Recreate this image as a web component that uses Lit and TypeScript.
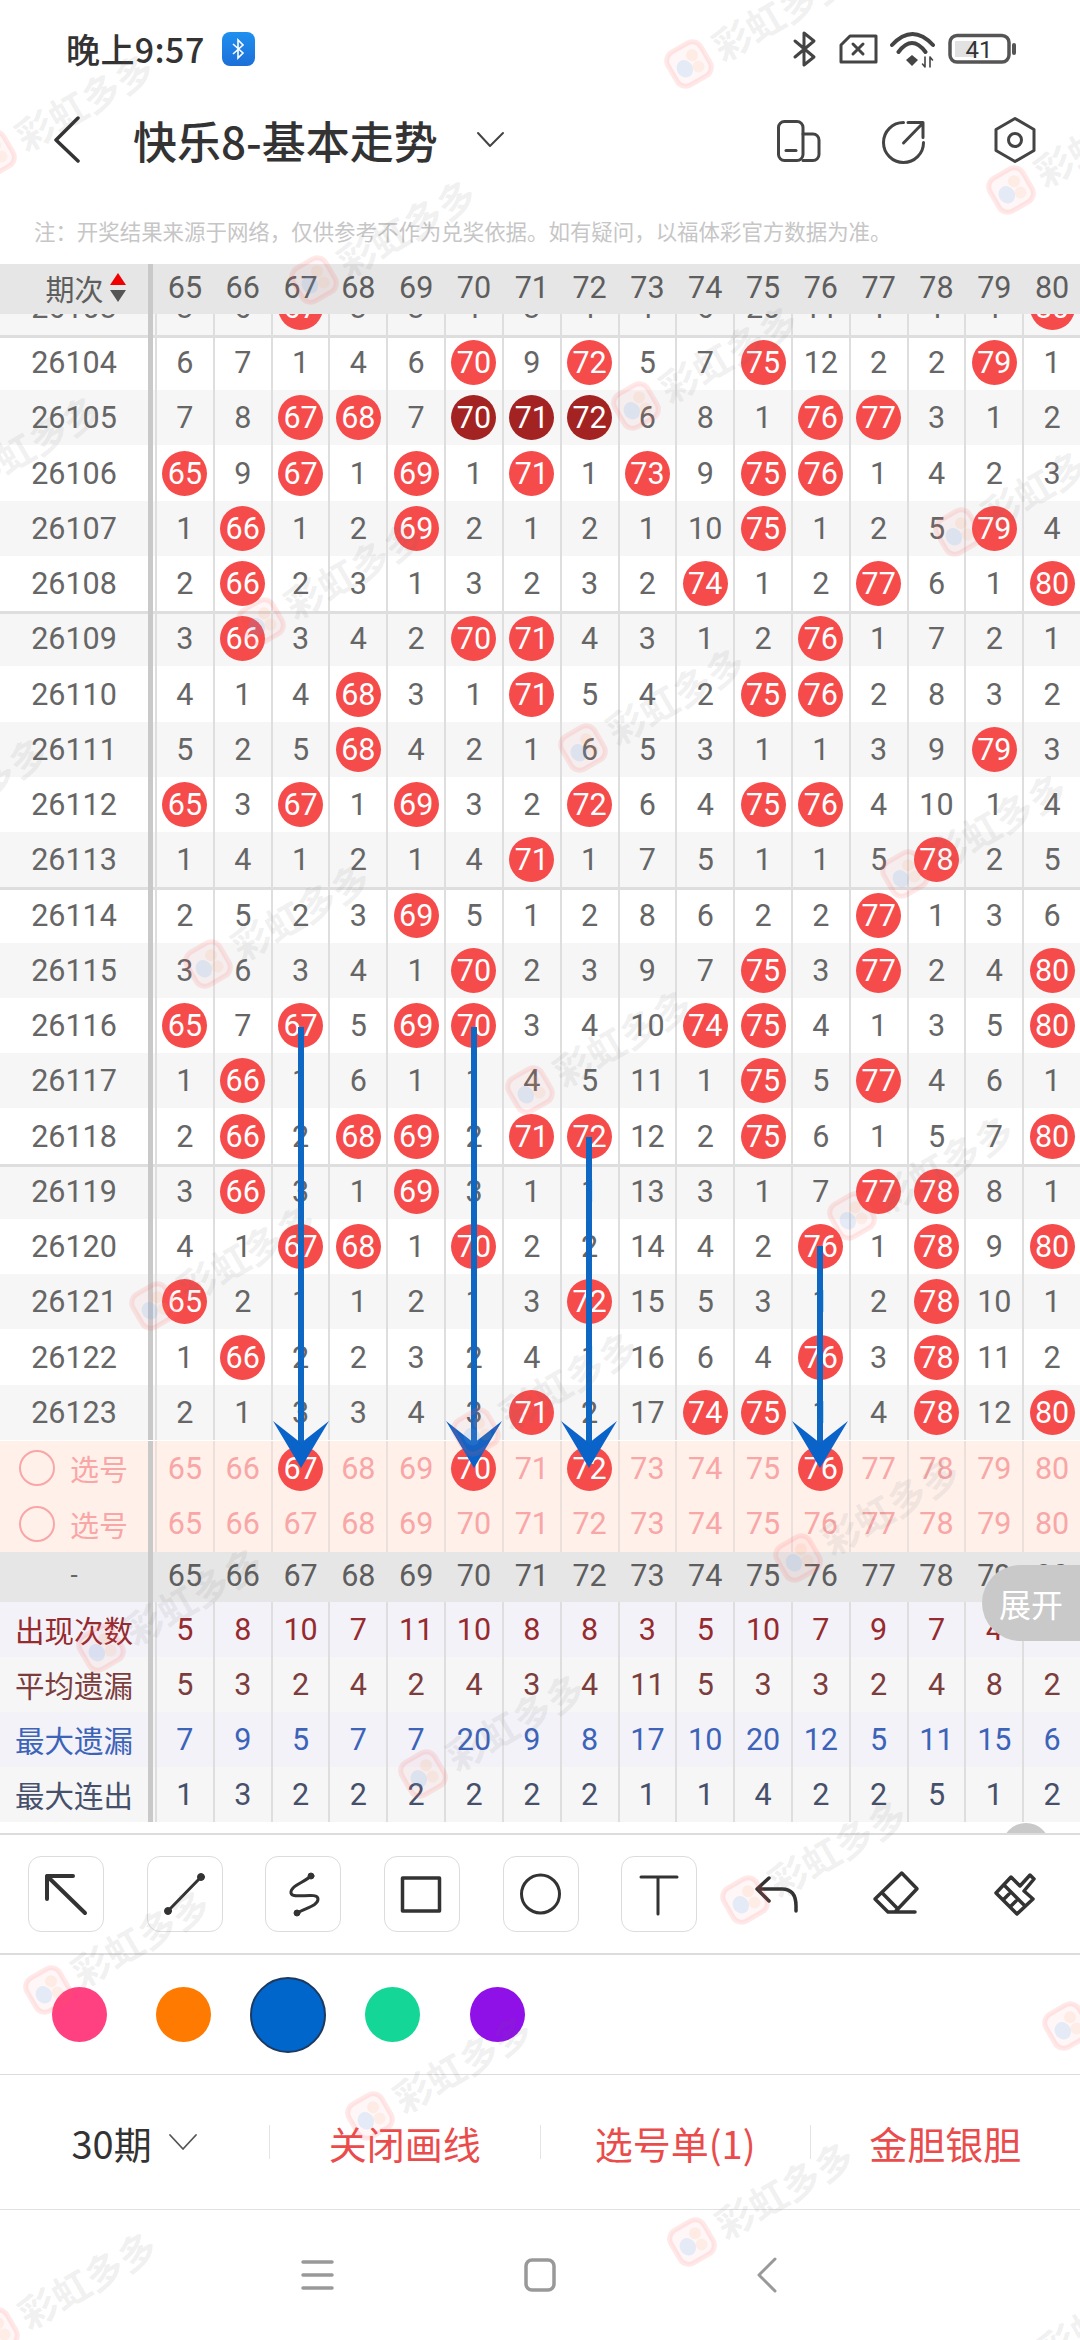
import { LitElement, html, css, svg, unsafeCSS } from 'lit'
import { customElement } from 'lit/decorators.js'

const ROWS: [number, string][] = [
  [26103, '3 6 *67 3 3 1 3 1 1 6 20 11 1 1 1 *80'],
  [26104, '6 7 1 4 6 *70 9 *72 5 7 *75 12 2 2 *79 1'],
  [26105, '7 8 *67 *68 7 !70 !71 !72 6 8 1 *76 *77 3 1 2'],
  [26106, '*65 9 *67 1 *69 1 *71 1 *73 9 *75 *76 1 4 2 3'],
  [26107, '1 *66 1 2 *69 2 1 2 1 10 *75 1 2 5 *79 4'],
  [26108, '2 *66 2 3 1 3 2 3 2 *74 1 2 *77 6 1 *80'],
  [26109, '3 *66 3 4 2 *70 *71 4 3 1 2 *76 1 7 2 1'],
  [26110, '4 1 4 *68 3 1 *71 5 4 2 *75 *76 2 8 3 2'],
  [26111, '5 2 5 *68 4 2 1 6 5 3 1 1 3 9 *79 3'],
  [26112, '*65 3 *67 1 *69 3 2 *72 6 4 *75 *76 4 10 1 4'],
  [26113, '1 4 1 2 1 4 *71 1 7 5 1 1 5 *78 2 5'],
  [26114, '2 5 2 3 *69 5 1 2 8 6 2 2 *77 1 3 6'],
  [26115, '3 6 3 4 1 *70 2 3 9 7 *75 3 *77 2 4 *80'],
  [26116, '*65 7 *67 5 *69 *70 3 4 10 *74 *75 4 1 3 5 *80'],
  [26117, '1 *66 1 6 1 1 4 5 11 1 *75 5 *77 4 6 1'],
  [26118, '2 *66 2 *68 *69 2 *71 *72 12 2 *75 6 1 5 7 *80'],
  [26119, '3 *66 3 1 *69 3 1 1 13 3 1 7 *77 *78 8 1'],
  [26120, '4 1 *67 *68 1 *70 2 2 14 4 2 *76 1 *78 9 *80'],
  [26121, '*65 2 1 1 2 1 3 *72 15 5 3 1 2 *78 10 1'],
  [26122, '1 *66 2 2 3 2 4 1 16 6 4 *76 3 *78 11 2'],
  [26123, '2 1 3 3 4 3 *71 2 17 *74 *75 1 4 *78 12 *80'],
]

const NUMS = Array.from({ length: 16 }, (_, i) => String(65 + i))
const PICKED = new Set(['67', '70', '72', '76'])

const STATS = [
  { label: '出现次数', cls: 's1', vals: '5 8 10 7 11 10 8 8 3 5 10 7 9 7 4 8' },
  { label: '平均遗漏', cls: 's2', vals: '5 3 2 4 2 4 3 4 11 5 3 3 2 4 8 2' },
  { label: '最大遗漏', cls: 's3', vals: '7 9 5 7 7 20 9 8 17 10 20 12 5 11 15 6' },
  { label: '最大连出', cls: 's4', vals: '1 3 2 2 2 2 2 2 1 1 4 2 2 5 1 2' },
]

// drawn strokes on top of the table: x, start y
const ARROWS = [
  [301, 1027],
  [474, 1027],
  [589, 1137],
  [820, 1246],
]

const COLORS = ['#ff4081', '#ff7a00', '#0066cc', '#14d696', '#9010e8']

const TOOLS = [
  svg`<path d="M19 43V20H45M19 20L57 57" stroke-width="4"/>`,
  svg`<path d="M22 55L55 21" stroke-width="3"/><circle cx="22" cy="55" r="3.5" fill="#333"/><circle cx="55" cy="21" r="3.5" fill="#333"/>`,
  svg`<path d="M46 20C38 27 25 30 26 37C27 44 53 35 53 43C53 50 40 52 32 57" stroke-width="3"/><circle cx="46" cy="20" r="3" fill="#333"/><circle cx="32" cy="57" r="3" fill="#333"/>`,
  svg`<rect x="19.5" y="22" width="37" height="33" stroke-width="3.5"/>`,
  svg`<circle cx="38.5" cy="38" r="19" stroke-width="3"/>`,
  svg`<path d="M20 21H56M37 21V58" stroke-width="3"/>`,
  svg`<path d="M30 22L18 33L30 45M18 33H43Q57 33 57 50V55" stroke-width="3.5"/>`,
  svg`<path d="M43.7 17L59 32.7L37 56H30L17 43ZM25 37.7L38.7 51.7M30 56H57" stroke-width="3.5"/>`,
  svg`<path d="M19 37L34 21L43 30L53 19L57 23L47 35L56 43L40 58ZM27 29L48 50M26 44L32 38M33 51L39 45" stroke-width="3.5"/>`,
]

const CJK = unsafeCSS(`"Noto Sans CJK SC", Roboto, sans-serif`)

@customElement('app-root')
export class AppRoot extends LitElement {
  static styles = css`
    :host {
      display: block;
      position: relative;
      width: 1080px;
      height: 2340px;
      overflow: hidden;
      background: #fff;
      font-family: Roboto, "Noto Sans CJK SC", sans-serif;
      color: #333;
    }
    svg { display: block; flex: none; }
    .line { fill: none; stroke-linecap: round; stroke-linejoin: round; }

    .status {
      display: flex;
      align-items: center;
      height: 98px;
      padding: 0 62px 0 66px;
    }
    .time {
      font-family: ${CJK};
      font-size: 34px;
      font-weight: 500;
      letter-spacing: 0.4px;
      color: #333;
      line-height: 1;
    }
    .badge {
      width: 33px;
      height: 34px;
      margin-left: 17px;
      border-radius: 8px;
      background: linear-gradient(#1e90f0, #1d6fd8);
      display: flex;
      align-items: center;
      justify-content: center;
    }
    .status-icons { display: flex; margin-left: auto; gap: 11px; }
    .status-icons svg:nth-child(2) { margin-left: 10px; }

    .titlebar {
      display: flex;
      align-items: center;
      height: 83px;
      padding: 0 41px 0 50px;
    }
    .title {
      margin-left: 53px;
      font-family: ${CJK};
      font-size: 44px;
      font-weight: 500;
      color: #333;
      line-height: 1;
      white-space: nowrap;
    }
    .title-chev { margin-left: 36px; }
    .title-icons { display: flex; margin-left: auto; }
    .title-icons svg:nth-child(2) { margin-left: 57px; }
    .title-icons svg:nth-child(3) { margin-left: 63px; }

    .notice {
      height: 83px;
      box-sizing: border-box;
      padding: 36px 0 0 34px;
      font-family: ${CJK};
      font-size: 21.45px;
      line-height: 28px;
      color: #c6c6c6;
      white-space: nowrap;
    }

    .row {
      display: flex;
      height: 55.26px;
      background: #fff;
      font-size: 30.5px;
      color: #666;
    }
    .row.gray { background: #f6f6f6; }
    .row.group { box-shadow: inset 0 3px 0 #dedede; }
    .row .left {
      flex: 0 0 153px;
      box-sizing: border-box;
      margin-right: 2px;
      border-right: 5px solid #c9c9c9;
      display: flex;
      align-items: center;
      justify-content: center;
      white-space: nowrap;
    }
    .cell {
      flex: 1 1 0;
      min-width: 0;
      box-sizing: border-box;
      border-left: 2px solid #dedede;
      display: flex;
      align-items: center;
      justify-content: center;
    }
    .ball {
      flex: none;
      width: 45px;
      height: 45px;
      border-radius: 50%;
      background: #f64b4b;
      color: #fff;
      display: flex;
      align-items: center;
      justify-content: center;
    }
    .ball.dark { background: #a32323; }

    .head { height: 50px; background: #e6e6e6; color: #5e5e5e; }
    .head .cell { border-left-color: transparent; padding-bottom: 3px; }
    .head .left { font-family: ${CJK}; font-size: 29px; gap: 6px; padding: 0 0 3px 0; }
    .head .left.sort { padding-left: 23px; }
    .head .dash { font-family: Roboto, sans-serif; font-size: 26px; color: #666; }

    .body { height: 1126.6px; overflow: hidden; }
    .body-inner { margin-top: -34.3px; }

    .pick { height: 55.5px; background: #fff0ea; color: #f9a6a6; }
    .pick .cell { border-left-color: #ebe0dc; }
    .pick .left {
      justify-content: flex-start;
      padding-left: 19px;
      gap: 15px;
      font-family: ${CJK};
      font-size: 29px;
    }
    .radio {
      width: 36px;
      height: 36px;
      box-sizing: border-box;
      border: 2.5px solid #f9a6a6;
      border-radius: 50%;
    }

    .stat { height: 55.1px; }
    .stat .left { font-family: ${CJK}; font-size: 29.5px; }
    .s1 { background: #f2f2f8; color: #962a2e; }
    .s2 { background: #f6f6f6; color: #7c3d3d; }
    .s3 { background: #f2f2f8; color: #3d63b8; }
    .s4 { background: #f6f6f6; color: #46506a; }

    .expand {
      position: absolute;
      left: 982px;
      top: 1565px;
      width: 98px;
      height: 76px;
      box-sizing: border-box;
      padding-left: 17px;
      border-radius: 38px 0 0 38px;
      background: #c9c9c9;
      color: #fff;
      font-family: ${CJK};
      font-size: 32px;
      display: flex;
      align-items: center;
      white-space: nowrap;
    }
    .gap { position: relative; height: 11.2px; overflow: hidden; }
    .peek {
      position: absolute;
      left: 1002px;
      top: 0.6px;
      width: 48px;
      height: 48px;
      border-radius: 50%;
      background: #c9c9c9;
    }

    .tools {
      display: flex;
      justify-content: space-between;
      box-sizing: border-box;
      padding: 21px 27px 0 28px;
      border-top: 2px solid #dcdcdc;
      border-bottom: 2px solid #dcdcdc;
      height: 122px;
    }
    .tool {
      width: 76px;
      height: 76px;
      box-sizing: border-box;
      border: 1.5px solid transparent;
      border-radius: 13px;
    }
    .tool.box { border-color: #dcdcdc; }
    .tool svg { margin: -1.5px; stroke: #333; }

    .colors {
      display: flex;
      align-items: center;
      height: 120px;
      box-sizing: border-box;
      padding-left: 27px;
      border-bottom: 1.5px solid #dcdcdc;
    }
    .slot { width: 104.5px; display: flex; justify-content: center; }
    .dot { width: 55px; height: 55px; border-radius: 50%; }
    .dot.on { width: 76px; height: 76px; box-sizing: border-box; border: 2px solid #1c3a60; }

    .actions {
      display: flex;
      align-items: center;
      height: 135px;
      box-sizing: border-box;
      border-bottom: 1.5px solid #e0e0e0;
      font-family: ${CJK};
      font-size: 38px;
      color: #ea4c4c;
    }
    .action {
      flex: 1 1 0;
      height: 34px;
      display: flex;
      align-items: center;
      justify-content: center;
      white-space: nowrap;
      border-left: 1.5px solid #e4e4e4;
    }
    .action:first-child {
      border-left: none;
      color: #333;
      gap: 16px;
    }
    .nav {
      display: flex;
      align-items: center;
      height: 130px;
      padding-left: 299.5px;
    }
    .nav svg:nth-child(2) { margin-left: 189.5px; }
    .nav svg:nth-child(3) { margin-left: 198px; }

    .arrows { position: absolute; left: 0; top: 0; }
    .marks { position: absolute; inset: 0; overflow: hidden; pointer-events: none; }
    .mark {
      position: absolute;
      display: flex;
      align-items: center;
      gap: 8px;
      transform: translate(-22px, -22px) rotate(-30deg);
      transform-origin: 22px 22px;
      font-family: ${CJK};
      font-size: 38px;
      font-weight: 700;
      line-height: 1;
      color: rgba(110, 110, 110, 0.1);
      white-space: nowrap;
    }
  `

  private renderValue(v: string) {
    if (v[0] === '*') return html`<span class="ball">${v.slice(1)}</span>`
    if (v[0] === '!') return html`<span class="ball dark">${v.slice(1)}</span>`
    return v
  }

  private renderMarks() {
    const marks = []
    for (let i = -3; i < 8; i++) {
      for (let j = -3; j < 10; j++) {
        const x = 48 + i * 322 + j * 53.2
        const y = 1990 + i * 126 - j * 342
        if (x < -220 || x > 1100 || y < -30 || y > 2420) continue
        marks.push(html`<div class="mark" style="left:${x}px;top:${y}px">
          <svg width="44" height="44" viewBox="0 0 44 44">
            <rect x="3" y="3" width="38" height="38" rx="10" fill="#ff5a5a" fill-opacity=".05" stroke="#ff5a5a" stroke-opacity=".14" stroke-width="5"/>
            <ellipse cx="16" cy="24" rx="8" ry="9" fill="#5aa5f0" fill-opacity=".16"/>
            <circle cx="29" cy="16" r="6" fill="#f5a05a" fill-opacity=".12"/>
            <circle cx="29" cy="29" r="6" fill="#f5a05a" fill-opacity=".1"/>
          </svg>
          <span>彩虹多多</span>
        </div>`)
      }
    }
    return marks
  }

  render() {
    return html`
      <div class="status">
        <span class="time">晚上9:57</span>
        <span class="badge">
          <svg width="14" height="22" viewBox="0 0 14 22" fill="none" stroke="#fff" stroke-width="1.6">
            <path d="M2 6L12 15L7 20V2L12 7L2 16"/>
          </svg>
        </span>
        <div class="status-icons">
          <svg class="line" width="26" height="40" viewBox="0 0 26 40" stroke="#444" stroke-width="3">
            <path d="M4 12L23 28L13 36V4L23 12L4 28"/>
          </svg>
          <svg class="line" width="40" height="40" viewBox="0 0 40 40" stroke="#444" stroke-width="3">
            <path d="M12 7H38V33H3V16ZM15 15L25 25M25 15L15 25"/>
          </svg>
          <svg width="46" height="40" viewBox="0 0 46 40">
            <g class="line" stroke="#444" stroke-width="4">
              <path d="M3 16Q23.500 -6 44 16M9.500 23Q23 5 36.500 23"/>
            </g>
            <path d="M17 31L23 26L29 31L23 37Z" fill="#444"/>
            <g class="line" stroke="#444" stroke-width="1.6">
              <path d="M36 28V38M33.500 35L36 38M41 28V38M41 28L43.500 31"/>
            </g>
          </svg>
          <svg width="72" height="40" viewBox="0 0 72 40">
            <rect x="9" y="12" width="20" height="16" fill="#e2e2e2"/>
            <rect x="4" y="6.500" width="59" height="26.500" rx="7" fill="none" stroke="#555" stroke-width="3.500"/>
            <rect x="66" y="14" width="4" height="12" rx="2" fill="#555"/>
            <text x="33" y="28.500" text-anchor="middle" font-family="Roboto" font-size="24" fill="#333">41</text>
          </svg>
        </div>
      </div>

      <div class="titlebar">
        <svg class="line" width="30" height="50" viewBox="0 0 30 50" stroke="#333" stroke-width="3.500">
          <path d="M28 3L6 25L28 46"/>
        </svg>
        <span class="title">快乐8-基本走势</span>
        <svg class="line title-chev" width="32" height="20" viewBox="0 0 32 20" stroke="#444" stroke-width="2">
          <path d="M4 3L16 16L29 3"/>
        </svg>
        <div class="title-icons">
          <svg class="line" width="48" height="50" viewBox="0 0 48 50" stroke="#444" stroke-width="3">
            <path d="M28 19H38A6 6 0 0 1 44 25V39.500A6 6 0 0 1 38 45.500H28"/>
            <rect x="3.500" y="6.500" width="24.500" height="39" rx="6"/>
            <path d="M11 35.500H21"/>
          </svg>
          <svg class="line" width="48" height="50" viewBox="0 0 48 50" stroke="#444" stroke-width="3">
            <path d="M23.500 7.500A20 20 0 1 0 43.500 27.500M23.500 28L43 8M28 7.500H43V22.500"/>
          </svg>
          <svg class="line" width="48" height="50" viewBox="0 0 48 50" stroke="#444" stroke-width="3">
            <path d="M24 3.500L43 14.500V35.500L24 46.500L5 35.500V14.500Z"/>
            <circle cx="24" cy="25" r="6.500"/>
          </svg>
        </div>
      </div>

      <div class="notice">注：开奖结果来源于网络，仅供参考不作为兑奖依据。如有疑问，以福体彩官方数据为准。</div>

      <div class="row head">
        <div class="left sort">
          <span>期次</span>
          <svg width="16" height="30" viewBox="0 0 16 30">
            <path d="M8 0L16 12H0Z" fill="#f00000"/>
            <path d="M0 17H16L8 29Z" fill="#555"/>
          </svg>
        </div>
        ${NUMS.map(n => html`<div class="cell">${n}</div>`)}
      </div>

      <div class="body">
        <div class="body-inner">
          ${ROWS.map(([id, vals]) => {
            const gray = id % 2 === 1
            const group = (id - 26104) % 5 === 0
            return html`<div class="row ${gray ? 'gray' : ''} ${group ? 'group' : ''}">
              <div class="left">${id}</div>
              ${vals.split(' ').map(v => html`<div class="cell">${this.renderValue(v)}</div>`)}
            </div>`
          })}
        </div>
      </div>

      <div class="row pick">
        <div class="left"><span class="radio"></span><span>选号</span></div>
        ${NUMS.map(n => html`<div class="cell">${PICKED.has(n) ? this.renderValue('*' + n) : n}</div>`)}
      </div>
      <div class="row pick">
        <div class="left"><span class="radio"></span><span>选号</span></div>
        ${NUMS.map(n => html`<div class="cell">${n}</div>`)}
      </div>

      <div class="row head">
        <div class="left"><span class="dash">-</span></div>
        ${NUMS.map(n => html`<div class="cell">${n}</div>`)}
      </div>

      ${STATS.map(s => html`<div class="row stat ${s.cls}">
        <div class="left">${s.label}</div>
        ${s.vals.split(' ').map(v => html`<div class="cell">${v}</div>`)}
      </div>`)}

      <div class="gap"><div class="peek"></div></div>

      <div class="tools">
        ${TOOLS.map((t, i) => html`<div class="tool ${i < 6 ? 'box' : ''}">
          <svg class="line" width="76" height="76" viewBox="0 0 76 76">${t}</svg>
        </div>`)}
      </div>

      <div class="colors">
        ${COLORS.map((c, i) => html`<div class="slot">
          <div class="dot ${i === 2 ? 'on' : ''}" style="background:${c}"></div>
        </div>`)}
      </div>

      <div class="actions">
        <div class="action">
          <span>30期</span>
          <svg class="line" width="30" height="18" viewBox="0 0 30 18" stroke="#555" stroke-width="1.800">
            <path d="M2 2L15 16L28 2"/>
          </svg>
        </div>
        <div class="action">关闭画线</div>
        <div class="action">选号单(1)</div>
        <div class="action">金胆银胆</div>
      </div>

      <div class="nav">
        <svg class="line" width="34" height="34" viewBox="0 0 34 34" stroke="#999" stroke-width="3.500">
          <path d="M3 4H32M3 17H32M3 30H32"/>
        </svg>
        <svg class="line" width="34" height="34" viewBox="0 0 34 34" stroke="#999" stroke-width="3.500">
          <rect x="3" y="2" width="28" height="30" rx="6"/>
        </svg>
        <svg class="line" width="24" height="36" viewBox="0 0 24 36" stroke="#999" stroke-width="3">
          <path d="M20 2L4 18L20 34"/>
        </svg>
      </div>

      <svg class="arrows" width="1080" height="2340" viewBox="0 0 1080 2340">
        ${ARROWS.map(([x, y]) => svg`
          <path d="M${x} ${y}V1445" stroke="#0f67c4" stroke-width="6" fill="none"/>
          <path d="M${x - 28} 1421L${x} 1443L${x + 28} 1421L${x} 1468Z" fill="#0a63c9"/>
        `)}
      </svg>

      <div class="expand">展开</div>
      <div class="marks">${this.renderMarks()}</div>
    `
  }
}
